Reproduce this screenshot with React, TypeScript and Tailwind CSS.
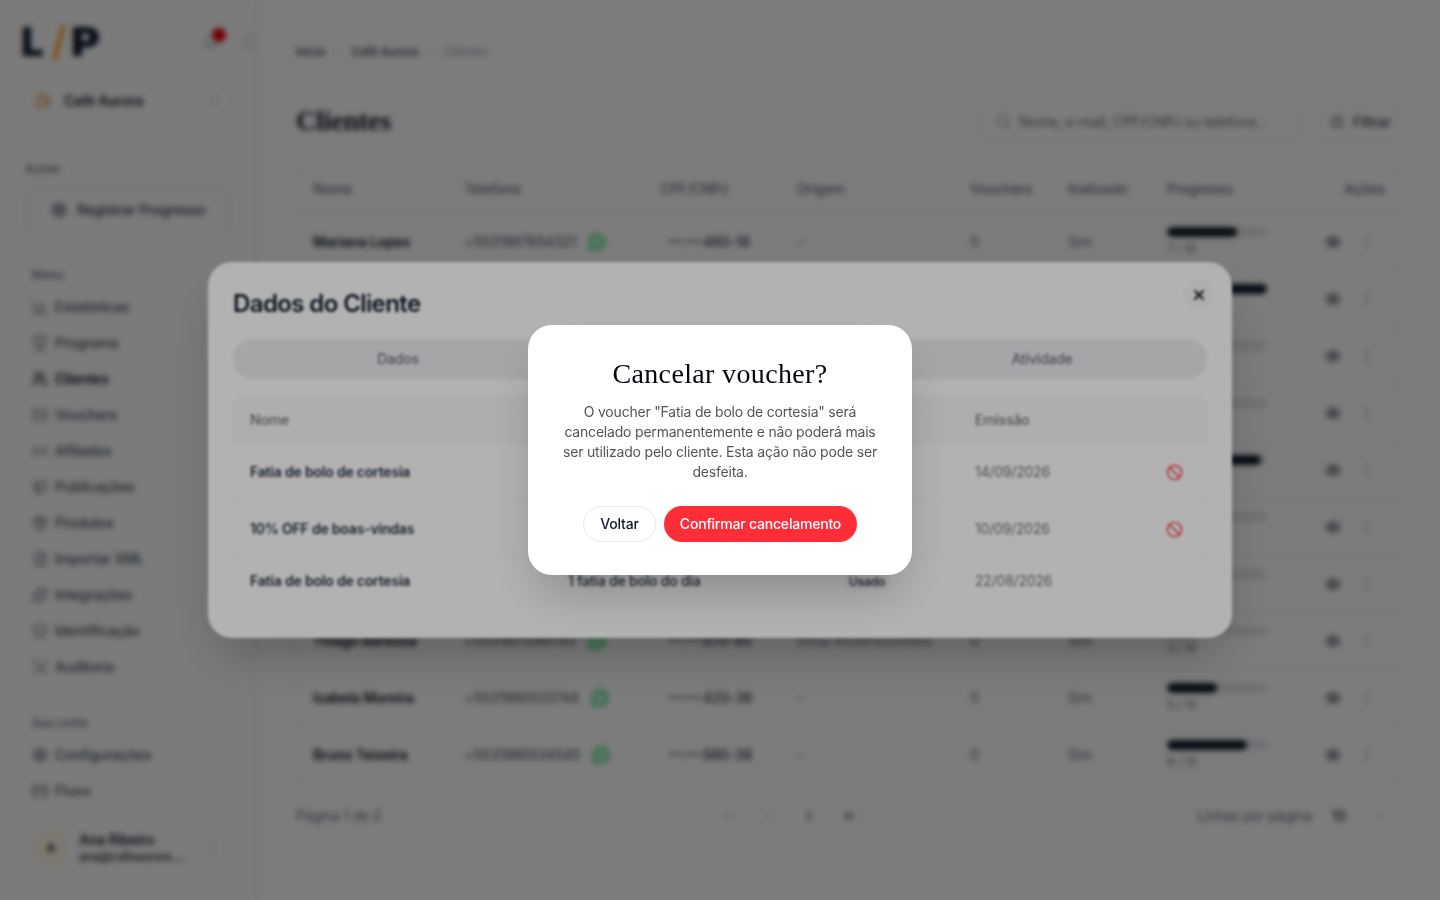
import React from "react";
import {
  BarChart3,
  Ban,
  Bell,
  ChevronRight,
  ChevronsLeft,
  ChevronLeft,
  ChevronsRight,
  ChevronsUpDown,
  Coffee,
  CreditCard,
  Eye,
  FileUp,
  Link2,
  Megaphone,
  MessageCircle,
  MoreVertical,
  Package,
  PanelLeft,
  Puzzle,
  ScanSearch,
  Search,
  Settings,
  SlidersHorizontal,
  Target,
  Ticket,
  Trophy,
  Users,
  BadgeCheck,
  X,
} from "lucide-react";

const SANS = "font-['Inter','Liberation_Sans',sans-serif]";
const SERIF = "font-['Liberation_Serif',serif]";

const menu = [
  { label: "Estatísticas", icon: BarChart3 },
  { label: "Programa", icon: Trophy },
  { label: "Clientes", icon: Users, active: true },
  { label: "Vouchers", icon: Ticket },
  { label: "Afiliados", icon: Link2 },
  { label: "Publicações", icon: Megaphone },
  { label: "Produtos", icon: Package },
  { label: "Importar XML", icon: FileUp },
  { label: "Integrações", icon: Puzzle },
  { label: "Identificação", icon: BadgeCheck },
  { label: "Auditoria", icon: ScanSearch },
];

const clients = [
  { name: "Mariana Lopes", phone: "+5531987654321", doc: "480-18", origin: "–", bar: "w-[70%]", score: "7 / 10" },
  { name: "Pedro Almeida", phone: "+5531998765432", doc: "120-44", origin: "–", bar: "w-full", score: "10 / 10" },
  { name: "Carla Souza", phone: "+5531976543210", doc: "230-51", origin: "–", bar: "w-[30%]", score: "3 / 10" },
  { name: "Rafael Costa", phone: "+5531965432109", doc: "310-27", origin: "–", bar: "w-[40%]", score: "4 / 10" },
  { name: "Juliana Rocha", phone: "+5531954321098", doc: "540-63", origin: "–", bar: "w-[94%]", score: "9 / 10" },
  { name: "André Martins", phone: "+5531943210987", doc: "650-72", origin: "–", bar: "w-[20%]", score: "2 / 10" },
  { name: "Lívia Nunes", phone: "+5531932109876", doc: "760-81", origin: "–", bar: "w-[50%]", score: "5 / 10" },
  { name: "Thiago Barbosa", phone: "+5531921098765", doc: "870-90", origin: "Shop Ifood/vouchers", bar: "w-[30%]", score: "3 / 10" },
  { name: "Isabela Moreira", phone: "+5531986533744", doc: "420-36", origin: "–", bar: "w-1/2", score: "5 / 10" },
  { name: "Bruno Teixeira", phone: "+5531986534545", doc: "980-38", origin: "–", bar: "w-[80%]", score: "8 / 10" },
];

const tableCols = "grid grid-cols-[152px_195px_137px_173px_98px_99px_150px_100px] items-center";

const Sidebar: React.FC = () => (
  <aside className="w-[257px] h-screen shrink-0 border-r border-gray-200 bg-[#fcfcfc] relative">
    <div className="flex items-center h-[84px] pl-[21px]">
      <div className="flex items-center text-[40px] leading-none font-black text-gray-900 tracking-normal">
        <span>L</span>
        <span className="text-amber-500 font-medium ml-[8px] mr-[5px]">/</span>
        <span className="scale-x-110 origin-left">P</span>
      </div>
      <div className="ml-auto relative mr-6">
        <Bell className="w-4 h-4 text-gray-400" />
        <span className="absolute -top-[6px] left-[9px] w-[14px] h-[14px] rounded-full bg-red-600" />
      </div>
      <PanelLeft className="w-4 h-4 -mr-[3px] text-gray-300" />
    </div>

    <div className="mx-[26px] h-[34px] flex items-center px-2 rounded-lg border border-gray-100">
      <Coffee className="w-4 h-4 text-amber-600" />
      <span className="ml-[13px] text-sm font-semibold text-gray-800">Café Aurora</span>
      <ChevronsUpDown className="w-3.5 h-3.5 ml-auto text-gray-300" />
    </div>

    <p className="mt-[43px] ml-[25px] text-xs font-medium text-gray-500 leading-4">Ações</p>
    <div className="mt-[10px] mx-[26px] h-[46px] flex items-center pl-6 rounded-xl border border-gray-200 w-[204px]">
      <Target className="w-4 h-4 text-gray-600" />
      <span className="ml-[10px] text-sm font-medium text-gray-700">Registrar Progresso</span>
    </div>

    <p className="mt-[34px] ml-[32px] text-xs font-medium text-gray-500 leading-4">Menu</p>
    <nav className="mt-[6px] ml-[32px]">
      {menu.map(({ label, icon: Icon, active }) => (
        <div key={label} className="h-9 flex items-center gap-[7px]">
          <Icon className={`w-4 h-4 ${active ? "text-gray-900" : "text-gray-500"}`} />
          <span className={`text-sm ${active ? "font-semibold text-gray-900" : "font-medium text-gray-600"}`}>{label}</span>
        </div>
      ))}
    </nav>

    <p className="mt-[30px] ml-[32px] text-xs font-medium text-gray-500 leading-4">Sua conta</p>
    <nav className="mt-[6px] ml-[32px]">
      <div className="h-9 flex items-center gap-[7px]">
        <Settings className="w-4 h-4 text-gray-600" />
        <span className="text-sm font-medium text-gray-600">Configurações</span>
      </div>
      <div className="h-9 flex items-center gap-[7px]">
        <CreditCard className="w-4 h-4 text-gray-600" />
        <span className="text-sm font-medium text-gray-600">Fluxo</span>
      </div>
    </nav>

    <div className="absolute left-[36px] bottom-[35px] w-[182px] flex items-center">
      <div className="w-[30px] h-[30px] rounded-full bg-amber-50 border border-amber-200 flex items-center justify-center text-xs font-bold text-gray-800">
        A
      </div>
      <div className="ml-[13px] min-w-0 flex-1">
        <p className="text-sm leading-[18px] font-semibold text-gray-800">Ana Ribeiro</p>
        <p className="text-xs leading-4 font-medium text-gray-800 truncate">ana@cafeaurora.com</p>
      </div>
      <ChevronsUpDown className="w-3.5 h-3.5 ml-3 text-gray-300" />
    </div>
  </aside>
);

const ClientsPage: React.FC = () => (
  <main className="flex-1 min-w-0 pl-[39px] pr-10 pt-[42px]">
    <div className="flex items-center h-5 text-xs">
      <span className="font-medium text-gray-700">Início</span>
      <ChevronRight className="w-3 h-3 mx-[7px] text-gray-300" />
      <span className="font-medium text-gray-700">Café Aurora</span>
      <ChevronRight className="w-3 h-3 mx-[7px] text-gray-300" />
      <span className="text-gray-400">Clientes</span>
    </div>

    <div className="mt-10 h-10 flex items-center">
      <h1 className={`${SERIF} text-[28px] pb-[2px] font-bold text-gray-900`}>Clientes</h1>
      <div className="ml-auto w-[320px] h-10 flex items-center pl-[14px] rounded-xl border border-gray-100">
        <Search className="w-4 h-4 text-gray-400" />
        <span className="ml-2 text-sm text-gray-500 truncate">Nome, e-mail, CPF/CNPJ ou telefone...</span>
      </div>
      <div className="ml-[18px] w-[82px] h-10 flex items-center pl-[10px] gap-2 rounded-xl border border-gray-100">
        <SlidersHorizontal className="w-4 h-4 text-gray-600" />
        <span className="text-sm font-medium text-gray-700">Filtrar</span>
      </div>
    </div>

    <div className="mt-6 rounded-xl border border-gray-100 text-sm">
      <div className={`${tableCols} h-[46px] pb-[2px] text-gray-500 font-medium`}>
        <span className="pl-4">Nome</span>
        <span className="pl-[15px]">Telefone</span>
        <span className="pl-4">CPF/CNPJ</span>
        <span className="pl-4">Origem</span>
        <span className="pl-4">Vouchers</span>
        <span className="pl-4">Inativado</span>
        <span className="pl-4">Progresso</span>
        <span className="text-right pr-4">Ações</span>
      </div>
      {clients.map((c) => (
        <div key={c.name} className={`${tableCols} h-[57px] border-t border-gray-100`}>
          <span className="pl-4 font-semibold text-gray-900 truncate">{c.name}</span>
          <span className="pl-[15px] flex items-center gap-3 text-gray-600">
            {c.phone}
            <MessageCircle className="w-[18px] h-[18px] text-green-500 fill-green-200" />
          </span>
          <span className="pl-[24px] text-gray-600">
            <span className="text-[11px]">***.***.</span>
            <span className="font-medium text-gray-700">{c.doc}</span>
          </span>
          <span className="pl-4 text-gray-500 truncate">{c.origin}</span>
          <span className="pl-4 text-gray-500">0</span>
          <span className="pl-4 text-gray-500">Sim</span>
          <div className="pl-4">
            <div className="w-[100px] h-[10px] rounded-full bg-gray-200 overflow-hidden">
              <div className={`h-full rounded-full bg-gray-900 ${c.bar}`} />
            </div>
            <p className="mt-1 text-xs leading-4 text-gray-500">{c.score}</p>
          </div>
          <span className="flex items-center justify-end gap-[18px] pr-[26px]">
            <Eye className="w-4 h-4 text-gray-800" />
            <MoreVertical className="w-4 h-4 text-gray-400" />
          </span>
        </div>
      ))}
    </div>

    <div className="mt-[14px] h-9 flex items-center relative text-sm">
      <span className="text-gray-500">Página 1 de 2</span>
      <div className="absolute left-[417px] flex items-center gap-2">
        {[ChevronsLeft, ChevronLeft, ChevronRight, ChevronsRight].map((Icon, i) => (
          <span key={i} className="w-8 h-8 flex items-center justify-center rounded-lg border border-gray-50">
            <Icon className={`w-4 h-4 ${i < 2 ? "text-gray-300" : "text-gray-700"}`} />
          </span>
        ))}
      </div>
      <span className="ml-auto text-gray-500">Linhas por página</span>
      <span className="ml-5 font-medium text-gray-700">10</span>
      <ChevronRight className="w-4 h-4 ml-[26px] mr-3 text-gray-300" />
    </div>
  </main>
);

const voucherRows = [
  { name: "Fatia de bolo de cortesia", reward: "1 fatia de bolo do dia", status: "Ativo", date: "14/09/2026", cancel: true, height: "h-[57px]" },
  { name: "10% OFF de boas-vindas", reward: "10% de desconto", status: "Ativo", date: "10/09/2026", cancel: true, height: "h-[57px]" },
  { name: "Fatia de bolo de cortesia", reward: "1 fatia de bolo do dia", status: "Usado", date: "22/08/2026", cancel: false, height: "h-[46px]" },
];

const voucherCols = "grid grid-cols-[334px_273px_134px_191px_1fr] items-center";

const ClientDialog: React.FC = () => (
  <div className="fixed inset-0 z-10 bg-black/30 backdrop-blur-[2.5px] flex items-center justify-center">
    <div className="relative w-[1024px] h-[376px] rounded-3xl bg-white px-[25px] pt-6 shadow-2xl">
      <h2 className="text-2xl leading-9 font-semibold text-gray-900 tracking-tight">Dados do Cliente</h2>
      <button className="absolute top-[18px] right-[18px] w-[30px] h-[30px] rounded-full bg-gray-50 flex items-center justify-center">
        <X className="w-4 h-4 text-gray-900" strokeWidth={3} />
      </button>

      <div className="mt-[17px] h-10 p-1 rounded-full bg-[#eeeef2] grid grid-cols-3 text-sm font-medium text-gray-500">
        <span className="flex items-center justify-center">Dados</span>
        <span className="flex items-center justify-center rounded-full bg-white text-gray-900">Vouchers</span>
        <span className="flex items-center justify-center">Atividade</span>
      </div>

      <div className="mt-4 rounded-xl border border-gray-100 text-sm">
        <div className={`${voucherCols} h-[47px] bg-gray-50 rounded-t-xl font-medium text-neutral-500`}>
          <span className="pl-4">Nome</span>
          <span>Recompensa</span>
          <span>Status</span>
          <span>Emissão</span>
          <span />
        </div>
        {voucherRows.map((row, i) => (
          <div key={i} className={`${voucherCols} ${row.height} border-t border-gray-100`}>
            <span className="pl-4 font-semibold text-gray-800">{row.name}</span>
            <span className="font-medium text-gray-800">{row.reward}</span>
            <span className="pl-[4px]">
              <span className="px-1 py-px rounded bg-gray-100 text-xs font-semibold text-gray-700">{row.status}</span>
            </span>
            <span className="text-neutral-500">{row.date}</span>
            <span>
              {row.cancel && <Ban className="w-[17px] h-[17px] text-red-500" />}
            </span>
          </div>
        ))}
      </div>
    </div>
  </div>
);

const ConfirmDialog: React.FC = () => (
  <div className="fixed inset-0 z-20 bg-black/30 backdrop-blur-[1.5px] flex items-center justify-center">
    <div className="w-[384px] h-[250px] rounded-3xl bg-white px-8 pt-[33px] shadow-2xl text-center">
      <h2 className={`${SERIF} text-[28px] leading-8 font-normal tracking-[0.35px] text-gray-950`}>Cancelar voucher?</h2>
      <p className="mt-3 text-sm leading-5 text-[#555]">
        O voucher "Fatia de bolo de cortesia" será cancelado permanentemente e não poderá mais ser utilizado pelo cliente. Esta ação não pode ser desfeita.
      </p>
      <div className="mt-6 flex justify-center gap-2">
        <button className="h-9 w-[73px] rounded-full border border-gray-200 bg-white text-sm font-medium text-gray-900">
          Voltar
        </button>
        <button className="h-9 w-[193px] rounded-full bg-[#ff2d38] text-sm font-medium text-white">
          Confirmar cancelamento
        </button>
      </div>
    </div>
  </div>
);

export default function App() {
  return (
    <div className={`${SANS} h-screen flex overflow-hidden bg-white tracking-[-0.2px]`}>
      <Sidebar />
      <ClientsPage />
      <ClientDialog />
      <ConfirmDialog />
    </div>
  );
}
